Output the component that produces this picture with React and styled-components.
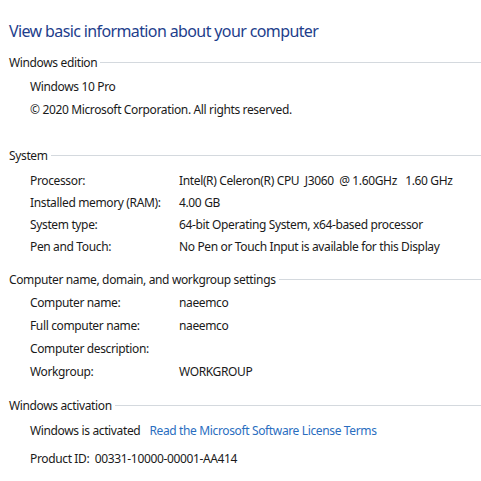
import React from 'react';
import styled, { createGlobalStyle } from 'styled-components';

const GlobalStyle = createGlobalStyle`
  html, body {
    margin: 0;
    padding: 0;
    background: #ffffff;
  }
  body {
    font-family: "Noto Sans", "Open Sans", sans-serif;
    font-size: 12px;
    letter-spacing: -0.36px;
    color: #1a1a1a;
  }
`;

const Page = styled.div`
  width: 481px;
  height: 481px;
  overflow: hidden;
  padding-left: 9px;
  box-sizing: border-box;
`;

const Title = styled.h1`
  margin: 21px 0 0 0;
  height: 20px;
  line-height: 20px;
  font-size: 16px;
  font-weight: 400;
  letter-spacing: -0.62px;
  color: #1e3e8c;
  white-space: nowrap;
`;

const SectionHeader = styled.div`
  display: flex;
  align-items: center;
  gap: 3px;
  height: 16px;
  margin-top: ${p => p.$top}px;
  white-space: nowrap;

  &::after {
    content: '';
    flex: 1;
    height: 1px;
    margin-top: 1px;
    background: #d4d9de;
  }
`;

const Rows = styled.div`
  display: flex;
  flex-direction: column;
  margin-top: ${p => p.$top}px;
  padding-left: 21px;
`;

const Row = styled.div`
  display: grid;
  grid-template-columns: 149px 1fr;
  align-items: center;
  height: ${p => p.$h}px;
  white-space: nowrap;
`;

const Line = styled.div`
  display: flex;
  align-items: center;
  height: ${p => p.$h}px;
  white-space: nowrap;
`;

const Label = styled.span``;

const Value = styled.span``;

const Link = styled.a`
  color: #2a6ebf;
  text-decoration: none;
  margin-left: 9px;
  cursor: pointer;
`;

const systemRows = [
  ['Processor:', 'Intel(R) Celeron(R) CPU\u00a0 J3060\u00a0 @ 1.60GHz\u00a0\u00a0 1.60 GHz'],
  ['Installed memory (RAM):', '4.00 GB'],
  ['System type:', '64-bit Operating System, x64-based processor'],
  ['Pen and Touch:', 'No Pen or Touch Input is available for this Display'],
];

const nameRows = [
  ['Computer name:', 'naeemco'],
  ['Full computer name:', 'naeemco'],
  ['Computer description:', ''],
  ['Workgroup:', 'WORKGROUP'],
];

export default function App() {
  return (
    <Page>
      <GlobalStyle />
      <Title>View basic information about your computer</Title>

      <SectionHeader $top={13}>Windows edition</SectionHeader>
      <Rows $top={5}>
        <Line $h={23}>Windows 10 Pro</Line>
        <Line $h={23}>© 2020 Microsoft Corporation. All rights reserved.</Line>
      </Rows>

      <SectionHeader $top={26}>System</SectionHeader>
      <Rows $top={6}>
        {systemRows.map(([k, v]) => (
          <Row key={k} $h={22}>
            <Label>{k}</Label>
            <Value>{v}</Value>
          </Row>
        ))}
      </Rows>

      <SectionHeader $top={14}>Computer name, domain, and workgroup settings</SectionHeader>
      <Rows $top={4}>
        {nameRows.map(([k, v]) => (
          <Row key={k} $h={23}>
            <Label>{k}</Label>
            <Value>{v}</Value>
          </Row>
        ))}
      </Rows>

      <SectionHeader $top={14}>Windows activation</SectionHeader>
      <Rows $top={3}>
        <Line $h={28}>
          Windows is activated
          <Link>Read the Microsoft Software License Terms</Link>
        </Line>
        <Line $h={28}>Product ID:&nbsp; 00331-10000-00001-AA414</Line>
      </Rows>
    </Page>
  );
}
